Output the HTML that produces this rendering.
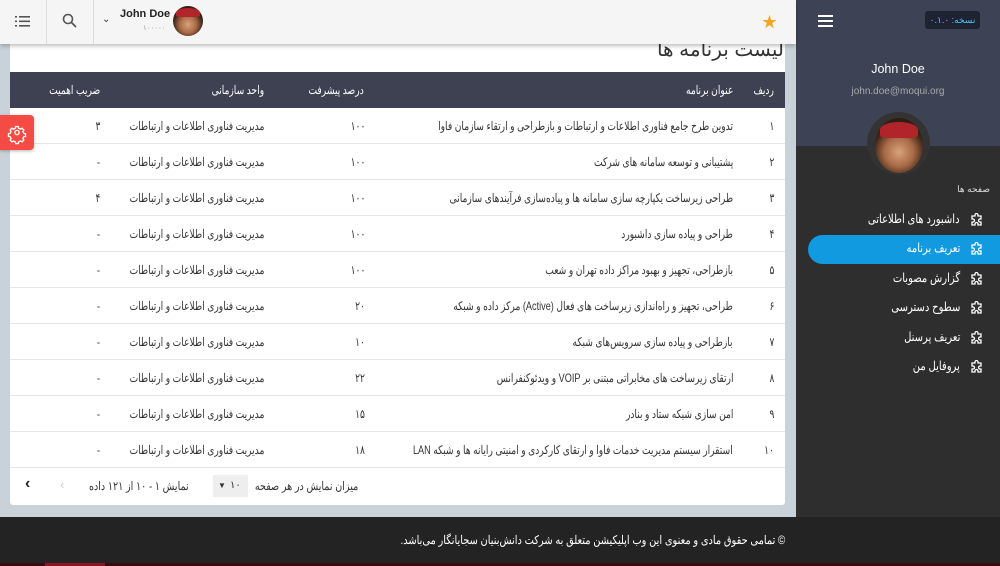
<!DOCTYPE html>
<html><head><meta charset="utf-8"><style>
*{box-sizing:border-box;margin:0;padding:0}
body{width:1000px;height:566px;overflow:hidden;background:#c9d1d9;font-family:"Liberation Sans","Noto Sans CJK SC",sans-serif;position:relative;color:#333}
.abs{position:absolute}
.sq{transform:scaleX(.8);transform-origin:right center;unicode-bidi:isolate}
.hdr{left:0;top:0;width:796px;height:44px;background:#f5f5f5;box-shadow:0 2px 4px rgba(0,0,0,.25);z-index:5}
.card{left:10px;top:38px;width:775px;height:467px;background:#fff;border-radius:3px}
.th{left:10px;top:72px;width:775px;height:36px;background:#3d4152;color:#fff;font-size:12px}
.row{left:10px;width:775px;height:36px;border-bottom:1px solid #e6e6e6;font-size:12px;color:#333}
.row span,.th span{position:absolute;top:0;line-height:36px;white-space:nowrap;direction:rtl;transform:scaleX(.76);transform-origin:right center}
.side{left:796px;top:0;width:204px;height:517px;background:#2e2e2e}
.sidetop{left:796px;top:0;width:204px;height:146px;background:#3d4254}
.foot{left:0;top:517px;width:1000px;height:46px;background:#232323;color:#fff;font-size:12px}
.menu{position:absolute;right:0;width:192px;height:29px;line-height:29px;color:#fff;font-size:12.5px;direction:rtl}
.menu b{position:absolute;right:40px;top:0;font-weight:normal;white-space:nowrap;transform:scaleX(.8);transform-origin:right center}
.menu svg{position:absolute;right:17px;top:8px}
.av{border-radius:50%;background:radial-gradient(circle at 50% 62%,#d8a27a 0,#a86a45 35%,#3a2418 62%,#1e1410 100%);overflow:hidden}
.av:before{content:"";position:absolute;left:10%;top:8%;width:80%;height:28%;background:#b0242a;border-radius:50% 50% 20% 20%}
</style></head><body>
<div class="abs card"></div>
<div class="abs" style="right:216px;top:38px;font-size:20px;color:#333;direction:rtl;line-height:24px">لیست برنامه ها</div>
<div class="abs th">
<span style="right:11px">ردیف</span>
<span style="right:52px">عنوان برنامه</span>
<span style="right:421px">درصد پیشرفت</span>
<span style="right:521px">واحد سازمانی</span>
<span style="right:685px">ضریب اهمیت</span>
</div>
<div id="rows"></div>
<div class="abs" style="left:10px;top:467px;width:775px;border-top:1px solid #e6e6e6"></div>
<div class="abs sq" style="right:642px;top:479px;font-size:12px;direction:rtl;white-space:nowrap">میزان نمایش در هر صفحه</div>
<div class="abs" style="left:213px;top:475px;width:35px;height:22px;background:#eee;font-size:10px;line-height:22px;padding-left:17px">۱۰<span style="position:absolute;left:5px;top:0;font-size:8px">▼</span></div>
<div class="abs sq" style="right:811px;top:479px;font-size:12px;direction:rtl;white-space:nowrap">نمایش ۱ - ۱۰ از ۱۲۱ داده</div>
<div class="abs" style="left:60px;top:477px;font-size:13px;color:#ccc">‹</div>
<div class="abs" style="left:25px;top:475px;font-size:16px;color:#222;font-weight:bold">‹</div>
<div class="abs" style="left:0;top:115px;width:34px;height:35px;background:#f44c45;border-radius:0 4px 4px 0;box-shadow:0 1px 3px rgba(0,0,0,.3)">
<svg width="34" height="35" viewBox="0 0 34 35"><g transform="translate(17,17.5) scale(.85)" fill="none" stroke="#fff" stroke-width="1.6"><circle r="2.5"/><path d="M-1.5,-7h3l.5,2 2,1 2-1 2,2-1,2 1,2 2,.5v3l-2,.5-1,2 1,2-2,2-2-1-2,1-.5,2h-3l-.5-2-2-1-2,1-2-2 1-2-1-2-2-.5v-3l2-.5 1-2-1-2 2-2 2,1 2-1z"/></g></svg></div>
<div class="abs hdr">
<div class="abs" style="left:46px;top:0;width:1px;height:44px;background:#ddd"></div>
<div class="abs" style="left:93px;top:0;width:1px;height:44px;background:#ddd"></div>
<svg class="abs" style="left:15px;top:15px" width="15" height="13"><g fill="#555"><rect x="0" y="1" width="2" height="1.6"/><rect x="4" y="1" width="11" height="1.6"/><rect x="0" y="5.5" width="2" height="1.6"/><rect x="4" y="5.5" width="11" height="1.6"/><rect x="0" y="10" width="2" height="1.6"/><rect x="4" y="10" width="11" height="1.6"/></g></svg>
<svg class="abs" style="left:62px;top:13px" width="16" height="16"><circle cx="6" cy="6" r="4.5" fill="none" stroke="#555" stroke-width="1.6"/><path d="M9.5,9.5L14,14" stroke="#555" stroke-width="1.8"/></svg>
<div class="abs" style="left:102px;top:14px;font-size:10px;color:#333">⌄</div>
<div class="abs" style="left:120px;top:8px;font-size:11px;font-weight:bold;color:#222">John Doe</div>
<div class="abs" style="left:143px;top:24px;font-size:7px;color:#999">۱۰۰۰۰۰</div>
<div class="abs av" style="left:173px;top:6px;width:30px;height:30px"></div>
<div class="abs" style="left:762px;top:11px;font-size:15px;color:#f5a623">★</div>
</div>
<div class="abs side"></div>
<div class="abs sidetop"></div>
<div class="abs" style="left:818px;top:15px;width:15px"><div style="height:2px;background:#fff;margin-bottom:3px"></div><div style="height:2px;background:#fff;margin-bottom:3px"></div><div style="height:2px;background:#fff"></div></div>
<div class="abs" style="left:925px;top:11px;width:55px;height:18px;background:#1f2230;border-radius:3px;color:#4fc3f7;font-size:9px;line-height:18px;text-align:center;direction:rtl">نسخه: ۰.۱.۰</div>
<div class="abs" style="left:796px;top:62px;width:204px;text-align:center;color:#fff;font-size:12.5px">John Doe</div>
<div class="abs" style="left:796px;top:86px;width:204px;text-align:center;color:#aaa;font-size:10px">john.doe@moqui.org</div>
<div class="abs" style="left:867px;top:112px;width:63px;height:63px;border-radius:50%;background:#333"></div>
<div class="abs av" style="left:875px;top:118px;width:48px;height:55px;border-radius:50%"></div>
<div class="abs" style="right:10px;top:184px;color:#ddd;font-size:9px;direction:rtl">صفحه ها</div>
<div class="abs" style="left:808px;top:235px;width:192px;height:29px;background:#129ae0;border-radius:15px 0 0 15px"></div>
<div id="menu"></div>
<div class="abs foot"><span class="abs" style="right:215px;top:16px;direction:rtl;white-space:nowrap;transform:scaleX(.82);transform-origin:right center">© تمامی حقوق مادی و معنوی این وب اپلیکیشن متعلق به شرکت دانش‌بنیان سجایانگار می‌باشد.</span></div>
<div class="abs" style="left:0;top:563px;width:1000px;height:3px;background:#3a0a10"></div>
<div class="abs" style="left:45px;top:563px;width:60px;height:3px;background:#8a1520"></div>
<script>
var d=[["۱","تدوین طرح جامع فناوری اطلاعات و ارتباطات و بازطراحی و ارتقاء سازمان فاوا","۱۰۰","۳"],["۲","پشتیبانی و توسعه سامانه های شرکت","۱۰۰","-"],["۳","طراحی زیرساخت یکپارچه سازی سامانه ها و پیاده‌سازی فرآیندهای سازمانی","۱۰۰","۴"],["۴","طراحی و پیاده سازی داشبورد","۱۰۰","-"],["۵","بازطراحی، تجهیز و بهبود مراکز داده تهران و شعب","۱۰۰","-"],["۶","طراحی، تجهیز و راه‌اندازی زیرساخت های فعال (Active) مرکز داده و شبکه","۲۰","-"],["۷","بازطراحی و پیاده سازی سرویس‌های شبکه","۱۰","-"],["۸","ارتقای زیرساخت های مخابراتی مبتنی بر VOIP و ویدئوکنفرانس","۲۲","-"],["۹","امن سازی شبکه ستاد و بنادر","۱۵","-"],["۱۰","استقرار سیستم مدیریت خدمات فاوا و ارتقای کارکردی و امنیتی رایانه ها و شبکه LAN","۱۸","-"]];
var h="";d.forEach(function(r,i){h+='<div class="abs row" style="top:'+(108+i*36)+'px"><span style="right:11px">'+r[0]+'</span><span style="right:52px">'+r[1]+'</span><span style="right:420px">'+r[2]+'</span><span style="right:521px">مدیریت فناوری اطلاعات و ارتباطات</span><span style="right:685px">'+r[3]+'</span></div>'});
document.getElementById("rows").innerHTML=h;
var m=["داشبورد های اطلاعاتی","تعریف برنامه","گزارش مصوبات","سطوح دسترسی","تعریف پرسنل","پروفایل من"];
var ic='<svg width="13" height="13" viewBox="0 0 13 13"><path d="M2,3h3v-1a1.5,1.5 0 0 1 3,0v1h3v3h-1a1.5,1.5 0 0 0 0,3h1v3h-3v-1a1.5,1.5 0 0 0-3,0v1h-3v-3h1a1.5,1.5 0 0 0 0-3h-1z" fill="none" stroke="#fff" stroke-width="1.3"/></svg>';
h="";m.forEach(function(t,i){h+='<div class="menu" style="top:'+(205+i*29.4)+'px">'+ic+'<b>'+t+'</b></div>'});
document.getElementById("menu").innerHTML=h;
</script>
</body></html>
